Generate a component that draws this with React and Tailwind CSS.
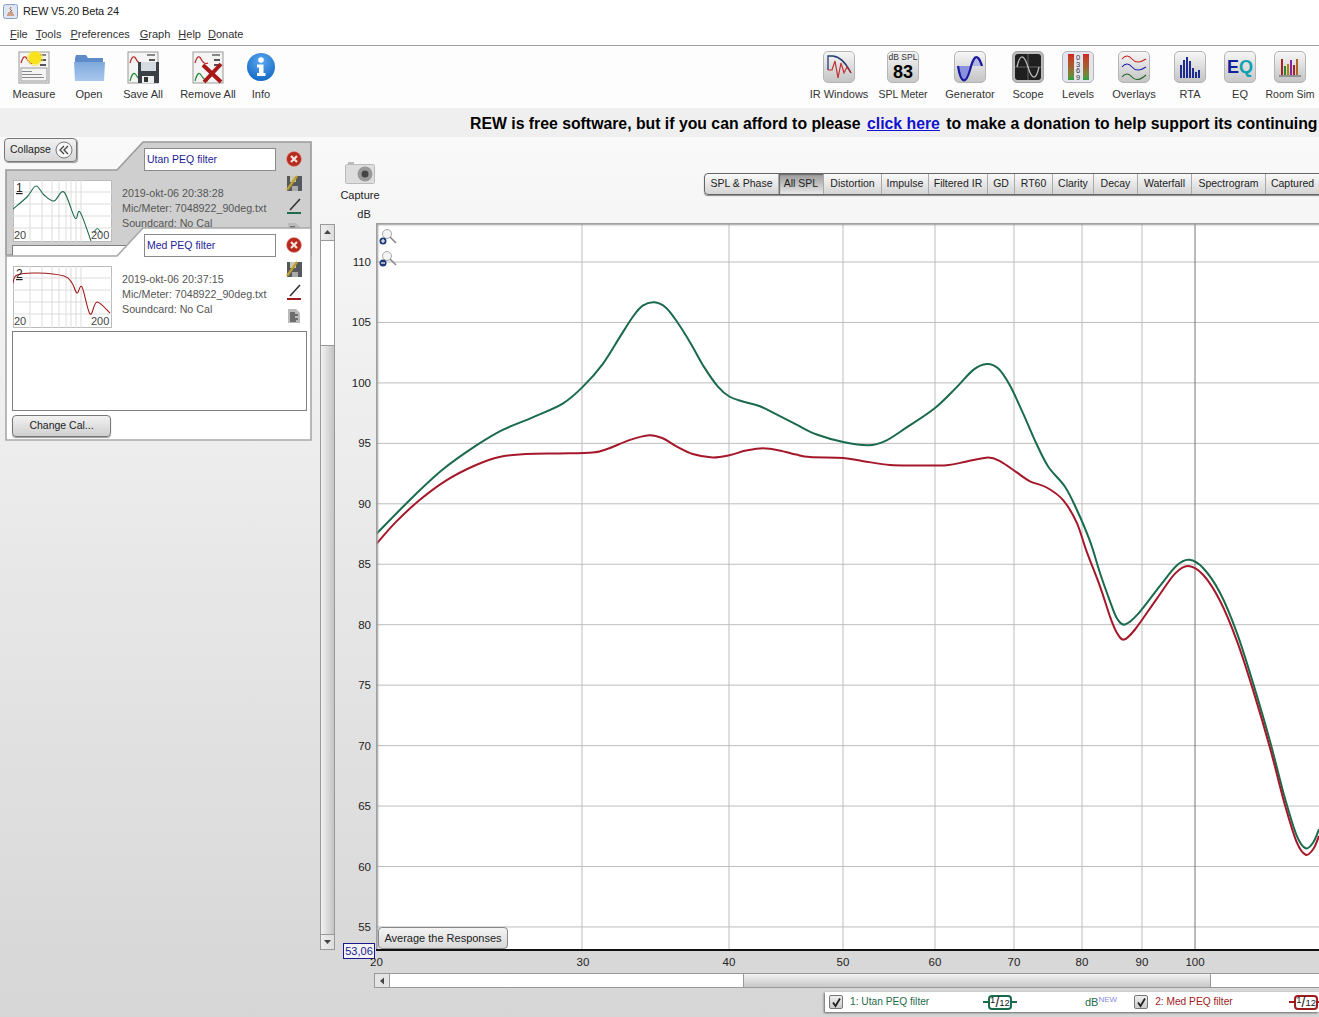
import React from "react";

const soften = (p) => p.map((q, i) => {
  if (i === 0 || i === p.length - 1) return q;
  return [q[0], +(0.18 * p[i - 1][1] + 0.64 * q[1] + 0.18 * p[i + 1][1]).toFixed(1)];
});

const smooth = (p) => {
  let d = `M${p[0][0]} ${p[0][1]}`;
  for (let i = 0; i < p.length - 1; i++) {
    const a = p[Math.max(0, i - 1)], b = p[i], c = p[i + 1], e = p[Math.min(p.length - 1, i + 2)];
    d += ` C${(b[0] + (c[0] - a[0]) / 6).toFixed(1)} ${(b[1] + (c[1] - a[1]) / 6).toFixed(1)} ${(c[0] - (e[0] - b[0]) / 6).toFixed(1)} ${(c[1] - (e[1] - b[1]) / 6).toFixed(1)} ${c[0]} ${c[1]}`;
  }
  return d;
};

const GREEN = [[376,534.3],[409.3,500],[442.7,468.3],[476,444],[502.7,429.3],[532.7,417.7],[562.7,404],[582.7,388.3],[602.7,365],[619.3,336.7],[632.7,315],[642.7,304.5],[654.3,300.7],[666,305.7],[677.7,321.7],[691,343.3],[704.3,368.3],[717.7,388.3],[729.3,397.3],[742.7,401.7],[759.3,405],[776,414],[796,424.3],[816.7,435],[843.3,442.7],[868.3,446.6],[885,443.3],[906.7,428.3],[935,408.3],[956.7,386.7],[973.3,367.3],[986.7,362.3],[998.3,366.3],[1010,383.3],[1023.3,413.3],[1036.7,446.7],[1048.3,466.7],[1065,486.7],[1076.7,506.7],[1090,542],[1100,573],[1110,604],[1117,620],[1125,627.5],[1138.3,618.3],[1160,583.3],[1176.7,562.7],[1189.3,557.5],[1203.3,565],[1220,590],[1236.7,630],[1253.3,683.3],[1270,740],[1285,803.3],[1296.7,840],[1305.7,852],[1313.3,843.3],[1319,829.3]];
const RED = [[376,544.3],[396,521.7],[419.3,500],[446,480],[476,463.3],[499.3,456],[526,453.7],[559.3,453.3],[592.7,453.3],[609.3,449.3],[629.3,439.3],[649.3,433.5],[662.7,437.3],[676,446],[692.7,455],[712.7,458.6],[729.3,455.7],[746,450],[762.7,447.4],[779.3,450],[796,455],[810,457.7],[843.3,457.3],[863.3,461],[890,466],[916.7,465],[946.7,466.3],[966.7,461.7],[988.3,456],[1000,459.3],[1016.7,473.3],[1030,482.3],[1046.7,486],[1063.3,498.3],[1076.7,521.7],[1086.7,550],[1100,587],[1110,620],[1117,634],[1124,642.5],[1135,635],[1156.7,596.7],[1175,570],[1188.3,563.3],[1203.3,571.7],[1220,598.3],[1236.7,638.3],[1253.3,690],[1270,746.7],[1285,810],[1296.7,846.7],[1305.7,858.5],[1313.3,850],[1319,836]];

const DB = [110,105,100,95,90,85,80,75,70,65,60,55];
const dbY = (v) => 262 + (110 - v) * 12.09;
const FREQ = [[30,582],[40,729],[50,843],[60,935],[70,1014],[80,1082],[90,1142],[100,1195]];

function U({ children, rest, className }) {
  return <span className={className}><span className="underline">{children}</span>{rest}</span>;
}

function MiniPanel({ second, third }) {
  return (
    <g>
      <rect x="1" y="1" width="30" height="31" fill="#f4f4f4" stroke="#999" />
      <path d="M3 12 Q6 2 9 8 T16 12" fill="none" stroke="#b22" strokeWidth="1.2" />
      <rect x="20" y="3" width="8" height="2" fill="#888" /><rect x="22" y="8" width="6" height="2" fill="#555" /><rect x="22" y="13" width="6" height="2" fill="#555" />
      {second ? <path d="M3 30 Q6 19 9 24 T16 30" fill="none" stroke="#283" strokeWidth="1.2" /> : null}
      {third ? <g fill="#888"><rect x="4" y="20" width="10" height="1" /><rect x="4" y="23" width="20" height="1" /><rect x="4" y="26" width="22" height="1" /><rect x="3" y="17" width="26" height="13" fill="none" stroke="#999" /></g> : null}
    </g>
  );
}

const IconMeasure = () => (
  <svg width="33" height="33" viewBox="0 0 33 33"><MiniPanel third /><circle cx="17" cy="7" r="6.5" fill="#f8e21a" /><circle cx="17" cy="7" r="7.5" fill="none" stroke="#f8ea60" /></svg>
);
const IconOpen = () => (
  <svg width="33" height="33" viewBox="0 0 33 33"><defs><linearGradient id="fo" x1="0" y1="0" x2="0" y2="1"><stop offset="0" stopColor="#7ea8dc" /><stop offset="1" stopColor="#a8c8ec" /></linearGradient></defs><path d="M2 7 L3 4 H13 L15 7 H30 V12 H2 Z" fill="#5f8cc8" /><path d="M1 11 H32 L31 30 H2 Z" fill="url(#fo)" /></svg>
);
const IconSaveAll = () => (
  <svg width="33" height="33" viewBox="0 0 33 33"><MiniPanel second /><rect x="11" y="11" width="21" height="21" fill="#3b3f46" /><rect x="14" y="11" width="15" height="9" fill="#d6dbe2" /><rect x="15" y="25" width="12" height="7" fill="#eee" /><rect x="17" y="26" width="4" height="5" fill="#333" /></svg>
);
const IconRemoveAll = () => (
  <svg width="33" height="33" viewBox="0 0 33 33"><MiniPanel second /><path d="M11 14 L29 31 M29 13 L12 31" stroke="#a81818" strokeWidth="4" /></svg>
);
const IconInfo = () => (
  <svg width="30" height="30" viewBox="0 0 30 30"><defs><radialGradient id="inf" cx="0.5" cy="0.3" r="0.8"><stop offset="0" stopColor="#5aa8f0" /><stop offset="1" stopColor="#0c62c0" /></radialGradient></defs><circle cx="15" cy="15" r="14" fill="url(#inf)" /><circle cx="15" cy="8" r="2.8" fill="#fff" /><path d="M11 12.5 H17.5 V21 H19.5 V24 H11 V21 H13 V15.5 H11 Z" fill="#fff" /></svg>
);

function Tile({ children }) {
  return (
    <div className="w-[32px] h-[32px] rounded-[5px] border border-[#b5b5b5] overflow-hidden bg-linear-to-b from-[#f6f6f6] to-[#c4c4c4]">
      <svg width="30" height="30" viewBox="0 0 30 30">{children}</svg>
    </div>
  );
}

function ToolItem({ w, label, narrow, children }) {
  return (
    <div className={`${w} flex flex-col items-center`}>
      <div className="h-[32px] flex items-center justify-center">{children}</div>
      <div className={`mt-[4px] leading-[14px] text-[#333] whitespace-nowrap ${narrow ? "text-[10.5px]" : "text-[11px]"}`}>{label}</div>
    </div>
  );
}

const TABS = [["SPL & Phase","w-[74px]"],["All SPL","w-[45px]"],["Distortion","w-[58px]"],["Impulse","w-[47px]"],["Filtered IR","w-[59px]"],["GD","w-[27px]"],["RT60","w-[38px]"],["Clarity","w-[41px]"],["Decay","w-[44px]"],["Waterfall","w-[54px]"],["Spectrogram","w-[74px]"],["Captured","w-[54px]"]];

function Thumb({ n, color, d, extra }) {
  return (
    <svg width="99" height="62" viewBox="0 0 99 62" className="bg-white block shrink-0 border-0">
      <rect x="0.5" y="0.5" width="98" height="61" fill="#fff" stroke="#bbb" />
      {[12,24,36,48].map((y) => <path key={y} d={`M0 ${y}H99`} stroke="#ddd" />)}
      {[17,29,39,46,53,58,63,68].map((x) => <path key={x} d={`M${x} 0V62`} stroke="#ddd" />)}
      <path d={d} fill="none" stroke={color} strokeWidth="1.1" />
      {extra ? <path d={extra} fill="none" stroke={color} strokeWidth="1" /> : null}
      <text x="3" y="12" fontSize="12" fill="#222" textDecoration="underline">{n}</text>
      <text x="1" y="59" fontSize="11" fill="#444">20</text>
      <text x="78" y="59" fontSize="11" fill="#444">200</text>
    </svg>
  );
}

const IconClose = () => (
  <svg width="16" height="16" viewBox="0 0 16 16"><circle cx="8" cy="8" r="7.5" fill="#b82a20" /><circle cx="8" cy="8" r="7.5" fill="none" stroke="#e8a090" strokeWidth="0.6" /><path d="M5 5 L11 11 M11 5 L5 11" stroke="#f4e4dc" strokeWidth="2.2" /></svg>
);
const IconSaveEdit = () => (
  <svg width="16" height="16" viewBox="0 0 16 16"><rect x="1" y="1" width="15" height="15" fill="#55595e" /><rect x="4" y="1" width="6" height="6" fill="#c9c9b0" /><rect x="6" y="11" width="6" height="5" fill="#aaa" /><path d="M1 15 L11 1" stroke="#bfa030" strokeWidth="2.2" /></svg>
);
const IconPencil = ({ color }) => (
  <svg width="16" height="16" viewBox="0 0 16 16"><path d="M4 12 L14 1" stroke="#333" strokeWidth="1.6" /><path d="M1 15 H15" stroke={color} strokeWidth="2" /></svg>
);
const IconDoc = () => (
  <svg width="16" height="16" viewBox="0 0 16 16"><path d="M2 1 H10 L14 5 V15 H2 Z" fill="#bbb" /><path d="M4 5H9 M4 7H12 M4 9H9 M4 11H12 M4 13H10" stroke="#222" /></svg>
);

function CalTab({ name, date, n, color, d, extra, top, h, fill, stroke, className, children }) {
  return (
    <div className={`relative w-[307px] ml-[5px] ${className}`} style={{ height: h }}>
      <svg className="absolute inset-0" width="307" height={h} viewBox={`0 0 307 ${h}`}>
        <path d={`M1 ${h - 1} V${top} H112 L138 1 H306 V${h - 1} Z`} fill={fill} stroke={stroke} strokeWidth="1.6" />
      </svg>
      <div className="relative flex">
        <div className="w-[280px] pl-[8px] pt-[7px]">
          <div className="ml-[131px] w-[132px] h-[23px] bg-white border border-[#8a8a8a] text-[#1d1d96] text-[10.5px] leading-[21px] pl-[2px]">{name}</div>
          <div className="flex mt-[9px]">
            <Thumb n={n} color={color} d={d} extra={extra} />
            <div className="ml-[10px] pt-[6px] text-[10.7px] leading-[15px] text-[#555] whitespace-nowrap">
              <div>{date}</div>
              <div>Mic/Meter: 7048922_90deg.txt</div>
              <div>Soundcard: No Cal</div>
            </div>
          </div>
          {children}
        </div>
        <div className="w-[18px] pt-[10px] flex flex-col gap-[7.5px] items-center">
          <IconClose />
          <IconSaveEdit />
          <IconPencil color={color} />
          <IconDoc />
        </div>
      </div>
    </div>
  );
}

const Arrow = ({ dir }) => {
  const p = { up: "M2 6 L5.5 2 L9 6 Z", down: "M2 3 L5.5 7 L9 3 Z", left: "M7 1.5 L3 5 L7 8.5 Z" }[dir];
  return <svg width="11" height="10" viewBox="0 0 11 10"><path d={p} fill="#444" /></svg>;
};

function Badge({ color }) {
  return (
    <div className="flex items-center shrink-0">
      <div className="w-[5px] h-[2px]" style={{ background: color }} />
      <div className="w-[24px] h-[15px] rounded-[4px] border-2 flex items-center justify-center text-[#222] text-[9.5px] leading-none bg-white" style={{ borderColor: color }}>
        <span className="relative -top-[2px]">1</span><span className="text-[14px] font-light">/</span><span className="relative top-[1px]">12</span>
      </div>
      <div className="w-[5px] h-[2px]" style={{ background: color }} />
    </div>
  );
}

const Check = () => (
  <div className="w-[14px] h-[14px] rounded-[2px] border border-[#777] bg-linear-to-b from-[#eee] to-[#ccc] flex items-center justify-center shrink-0">
    <svg width="11" height="11" viewBox="0 0 11 11"><path d="M2 5.5 L4.5 9 L9 1.5" fill="none" stroke="#222" strokeWidth="1.8" /></svg>
  </div>
);

const Lens = ({ minus }) => (
  <svg width="18" height="18" viewBox="0 0 18 18">
    <circle cx="8" cy="6" r="4.5" fill="#f4f4f4" stroke="#aaa" /><path d="M11 9 L17 15" stroke="#888" strokeWidth="1.6" />
    <circle cx="4" cy="13" r="3.5" fill="#1d3a78" />
    <path d={minus ? "M2 13H6" : "M2 13H6M4 11V15"} stroke="#fff" strokeWidth="1.2" />
  </svg>
);

export default function App() {
  return (
    <div className="w-[1319px] h-[1017px] overflow-hidden bg-white font-['Liberation_Sans',Arial,sans-serif]">
      <div className="h-[23px] flex items-center pl-[3px]">
        <svg width="15" height="15" viewBox="0 0 15 15"><rect x="0.5" y="0.5" width="14" height="14" rx="2" fill="#dce6f4" stroke="#8aa0c0" /><path d="M4 11 H11 M5 9 H10 M8 3 Q6 5 8 6 T7 8" fill="none" stroke="#c05a20" /></svg>
        <span className="ml-[5px] text-[11px] text-[#222] tracking-[-0.15px]">REW V5.20 Beta 24</span>
      </div>
      <div className="h-[23px] flex items-center pl-[10px] text-[11px] text-[#333] border-b border-[#a0a0a0]">
        <U rest="ile">F</U>
        <U className="ml-[8px]" rest="ools">T</U>
        <U className="ml-[9px]" rest="references">P</U>
        <U className="ml-[10px]" rest="raph">G</U>
        <U className="ml-[8px]" rest="elp">H</U>
        <U className="ml-[7px]" rest="onate">D</U>
      </div>
      <div className="h-[62px] pt-[5px] flex bg-[#fdfdfd]">
        <div className="flex pl-[5px]">
          <ToolItem w="w-[58px]" label="Measure"><IconMeasure /></ToolItem>
          <ToolItem w="w-[52px]" label="Open"><IconOpen /></ToolItem>
          <ToolItem w="w-[56px]" label="Save All"><IconSaveAll /></ToolItem>
          <ToolItem w="w-[74px]" label="Remove All"><IconRemoveAll /></ToolItem>
          <ToolItem w="w-[32px]" label="Info"><IconInfo /></ToolItem>
        </div>
        <div className="flex ml-auto">
          <ToolItem w="w-[68px]" label="IR Windows"><Tile><path d="M4 18 V4 H9 Q19 5 27 21" fill="none" stroke="#223a70" strokeWidth="1.3" /><path d="M4 18 H8 L11 9 L14 26 L17 11 L20 21 L23 15 L27 21" fill="none" stroke="#c03030" strokeWidth="1.2" /></Tile></ToolItem>
          <ToolItem w="w-[60px]" label="SPL Meter" narrow>
            <div className="w-[32px] h-[32px] rounded-[5px] border border-[#b5b5b5] bg-linear-to-b from-[#f4f4f4] to-[#c8c8c8] flex flex-col items-center">
              <div className="text-[8.5px] leading-[11px] text-[#333] whitespace-nowrap">dB SPL</div>
              <div className="text-[18px] leading-[19px] font-bold text-black">83</div>
            </div>
          </ToolItem>
          <ToolItem w="w-[74px]" label="Generator"><Tile><path d="M3 14 C6 33 11 32 15 18 L15 14 Z" fill="#8a90dc" /><path d="M15 18 C18 6 22 -2 27 14 L27 14 H15 Z" fill="#8a90dc" opacity="0.55" /><path d="M3 14 C6 33 11 32 15 18 C18 6 22 -2 27 14" fill="none" stroke="#1a1a9c" strokeWidth="2.2" /></Tile></ToolItem>
          <ToolItem w="w-[42px]" label="Scope">
            <div className="w-[32px] h-[32px] rounded-[5px] border border-[#a5a5a5] bg-[#bbb] p-[2px]">
              <div className="w-full h-full rounded-[3px] bg-[#1f1f1f] overflow-hidden">
                <svg width="26" height="26" viewBox="0 0 26 26"><path d="M13 0V26 M0 13H26" stroke="#666" /><path d="M2 13 C5 -1 9 0 13 13 S21 27 24 13" fill="none" stroke="#bbb" strokeWidth="1.3" /></svg>
              </div>
            </div>
          </ToolItem>
          <ToolItem w="w-[58px]" label="Levels">
            <div className="w-[32px] h-[32px] rounded-[5px] border border-[#b5b5b5] bg-[#e4e4ee] flex justify-center gap-[2px] px-[3px] py-[2px]">
              <div className="w-[6px] bg-linear-to-b from-[#d02020] via-[#a06030] to-[#20a040]" />
              <div className="text-[7.5px] leading-[6.5px] text-[#333] pt-[1px] w-[5px] text-center">0 3 6 9</div>
              <div className="w-[6px] bg-linear-to-b from-[#d02020] via-[#a06030] to-[#20a040]" />
            </div>
          </ToolItem>
          <ToolItem w="w-[54px]" label="Overlays"><Tile><path d="M3 7 Q8 1 13 7 T27 7" fill="none" stroke="#c22" strokeWidth="1.1" /><path d="M3 15 Q8 9 13 15 T27 15" fill="none" stroke="#22a" strokeWidth="1.1" /><path d="M3 25 Q8 19 13 25 T27 23" fill="none" stroke="#262" strokeWidth="1.1" /></Tile></ToolItem>
          <ToolItem w="w-[58px]" label="RTA"><Tile><path d="M6 26V13 M9 26V8 M12 26V5 M15 26V9 M18 26V16 M21 26V20 M24 26V18" stroke="#1c2c90" strokeWidth="2" /></Tile></ToolItem>
          <ToolItem w="w-[42px]" label="EQ">
            <div className="w-[32px] h-[32px] rounded-[5px] border border-[#b5b5b5] bg-linear-to-b from-[#f4f4f4] to-[#c8c8c8] flex items-center justify-center">
              <span className="text-[#10209a] text-[18px] font-bold leading-none">E</span><span className="text-[#10a0b0] text-[18px] font-bold leading-none">Q</span>
            </div>
          </ToolItem>
          <ToolItem w="w-[58px]" label="Room Sim" narrow><Tile><path d="M7 23V7" stroke="#a22" strokeWidth="2" /><path d="M10 23V14" stroke="#283" strokeWidth="2" /><path d="M13 23V12" stroke="#a80" strokeWidth="2" /><path d="M16 23V8" stroke="#82a" strokeWidth="2" /><path d="M19 23V13" stroke="#a22" strokeWidth="2" /><path d="M22 23V7" stroke="#a62" strokeWidth="2" /><path d="M4 24H26" stroke="#555" /></Tile></ToolItem>
        </div>
      </div>
      <div className="h-[29px] bg-[#efefef] pl-[470px] pt-[6px] text-[15.8px] leading-[20px] font-bold text-black whitespace-nowrap overflow-hidden">
        REW is free software, but if you can afford to please <a className="text-[#1212d0] underline mx-[2px]">click here</a> to make a donation to help support its continuing
      </div>

      <div className="h-[880px] flex bg-linear-to-b from-[#f9f9f9] to-[#d6d6d6]">
        <div className="w-[320px] shrink-0">
          <div className="ml-[4px] mt-[1px] w-[73px] h-[24px] rounded-[4px] border border-[#777] bg-linear-to-b from-[#f2f2f2] to-[#d8d8d8] flex items-center pl-[5px] text-[10.5px] text-[#222] shadow-[1px_1px_1px_#999] relative z-10">
            Collapse
            <svg className="ml-[4px]" width="18" height="18" viewBox="0 0 18 18"><circle cx="9" cy="9" r="8" fill="#f8f8f8" stroke="#777" /><path d="M9 5 L5 9 L9 13 M13 5 L9 9 L13 13" fill="none" stroke="#444" strokeWidth="1.3" /></svg>
          </div>
          <CalTab className="-mt-[21px]" name="Utan PEQ filter" date="2019-okt-06 20:38:28" n="1" color="#1f6b4a" top={29} h={115} fill="#cfcfcf" stroke="#9a9a9a"
            d={smooth([[0,29],[14,17],[23,6],[31,15],[41,21],[51,12],[62,38],[67,32],[78,61]])} extra="M81 53 Q84 44 88 53">
            <div className="mt-[3px] -ml-[1px] w-[295px] h-[30px] bg-white border border-[#808080]" />
          </CalTab>
          <CalTab className="-mt-[29px]" name="Med PEQ filter" date="2019-okt-06 20:37:15" n="2" color="#a01c1c" top={29} h={214} fill="#ffffff" stroke="#a8a8a8"
            d={smooth([[0,17],[4,9],[24,7],[51,10],[59,17],[64,27],[69,21],[77,48],[84,36],[97,47]])}>
            <div className="mt-[3px] -ml-[1px] w-[295px] h-[80px] bg-white border border-[#808080]" />
            <div className="mt-[4px] -ml-[1px] w-[99px] h-[22px] rounded-[4px] border border-[#777] bg-linear-to-b from-[#f2f2f2] to-[#cfcfcf] text-[10.5px] text-[#222] flex items-center justify-center shadow-[0_1px_1px_#999]">Change Cal...</div>
          </CalTab>
        </div>

        <div className="w-[15px] shrink-0 mt-[87px] h-[726px] border border-[#999] bg-white flex flex-col">
          <div className="h-[16px] border-b border-[#999] bg-linear-to-r from-[#eee] to-[#ddd] flex items-center justify-center"><Arrow dir="up" /></div>
          <div className="h-[104px]" />
          <div className="flex-1 border-y border-[#999] bg-linear-to-r from-[#f2f2f2] to-[#c4c4c4]" />
          <div className="h-[14px] bg-linear-to-r from-[#eee] to-[#ddd] flex items-center justify-center"><Arrow dir="down" /></div>
        </div>

        <div className="flex-1 min-w-0 flex flex-col">
          <div className="h-[86px] relative flex">
            <div className="w-[50px] pt-[25px] flex flex-col items-center">
              <svg width="30" height="23" viewBox="0 0 30 23"><rect x="0.5" y="2.5" width="29" height="19" rx="1" fill="#ddd" stroke="#bbb" /><rect x="3" y="0" width="6" height="3" fill="#bbb" /><circle cx="20" cy="12" r="7.5" fill="#999" /><circle cx="20" cy="12" r="3.5" fill="#444" /></svg>
              <div className="mt-[3px] text-[11px] leading-[14px] text-[#222]">Capture</div>
              <div className="mt-[5px] text-[11px] leading-[14px] text-[#222] ml-[8px]">dB</div>
            </div>
            <div className="absolute left-[369px] top-[36px] flex h-[22px] w-[630px] rounded-l-[4px] border border-[#666] shadow-[0_1px_1px_#888] bg-linear-to-b from-[#fafafa] to-[#d4d4d4] text-[10.5px] text-[#222]">
              {TABS.map(([t, w]) => (
                <div key={t} className={`${w} shrink-0 flex items-center justify-center whitespace-nowrap border-r border-[#aaa] ${t === "All SPL" ? "bg-linear-to-b from-[#9a9a9a] to-[#e8e8e8] shadow-[inset_1px_1px_1px_#666]" : ""}`}>{t}</div>
              ))}
            </div>
          </div>

          <div className="flex h-[728px]">
            <div className="w-[41px] relative text-[11.5px] text-[#222]">
              {DB.map((v) => (
                <div key={v} className="absolute right-[5px] leading-[14px]" style={{ top: dbY(v) - 223 - 7 }}>{v}</div>
              ))}
            </div>
            <div className="flex-1 relative bg-white border-b-2 border-[#111] overflow-hidden">
              <svg className="absolute inset-0" width="943" height="727" viewBox="376 223 943 727">
                {DB.map((v) => <path key={v} d={`M376 ${dbY(v)}H1319`} stroke="#bdbdbd" />)}
                {FREQ.map(([f, x]) => <path key={f} d={`M${x} 223V950`} stroke={f === 100 ? "#777" : "#bdbdbd"} />)}
                <path d={smooth(soften(GREEN))} fill="none" stroke="#1a6a4c" strokeWidth="2" />
                <path d={smooth(soften(RED))} fill="none" stroke="#a5182a" strokeWidth="2" />
              </svg>
              <div className="absolute inset-0 shadow-[inset_2px_2px_2px_#9a9a9a]" />
              <div className="absolute left-[3px] top-[5px]"><Lens /></div>
              <div className="absolute left-[3px] top-[27px]"><Lens minus /></div>
              <div className="absolute left-[2px] bottom-0 w-[130px] h-[22px] rounded-[4px] border border-[#888] bg-linear-to-b from-[#f4f4f4] to-[#d8d8d8] text-[11px] text-[#222] flex items-center justify-center whitespace-nowrap">Average the Responses</div>
            </div>
          </div>

          <div className="h-[22px] relative text-[11.5px] text-[#222]">
            <div className="absolute left-[8px] -top-[8px] w-[32px] h-[16px] border border-[#1a1a90] bg-[#f4f4f8] text-[#1a1a90] text-[11px] leading-[14px] text-center">53,06</div>
            <div className="absolute left-[35px] top-[4px] leading-[14px]">20</div>
            {FREQ.map(([f, x]) => (
              <div key={f} className="absolute top-[4px] leading-[14px] w-[30px] text-center" style={{ left: x - 335 - 15 + (f === 30 ? 1 : 0) }}>{f}</div>
            ))}
          </div>

          <div className="ml-[39px] h-[15px] flex border-y border-[#999] bg-white">
            <div className="w-[16px] border-x border-[#999] bg-[#e4e4e4] flex items-center justify-center"><Arrow dir="left" /></div>
            <div className="w-[353px]" />
            <div className="w-[468px] border-x border-[#999] bg-linear-to-b from-[#f2f2f2] to-[#c8c8c8]" />
          </div>

          <div className="mt-[4px] ml-[490px] h-[20px] flex items-center bg-white shadow-[-1px_1px_2px_#666] pl-[4px] text-[10.2px] whitespace-nowrap overflow-hidden">
            <Check />
            <span className="ml-[7px] w-[133px] text-[#1f6b4a] shrink-0">1: Utan PEQ filter</span>
            <Badge color="#1a6a4c" />
            <span className="ml-[68px] text-[#1f6b4a] text-[11px] shrink-0">dB<sup className="text-[8px] text-[#8a8ae0]">NEW</sup></span>
            <div className="ml-[17px]"><Check /></div>
            <span className="ml-[7px] w-[134px] text-[#a01c1c] shrink-0">2: Med PEQ filter</span>
            <Badge color="#a01c1c" />
          </div>
        </div>
      </div>
    </div>
  );
}
